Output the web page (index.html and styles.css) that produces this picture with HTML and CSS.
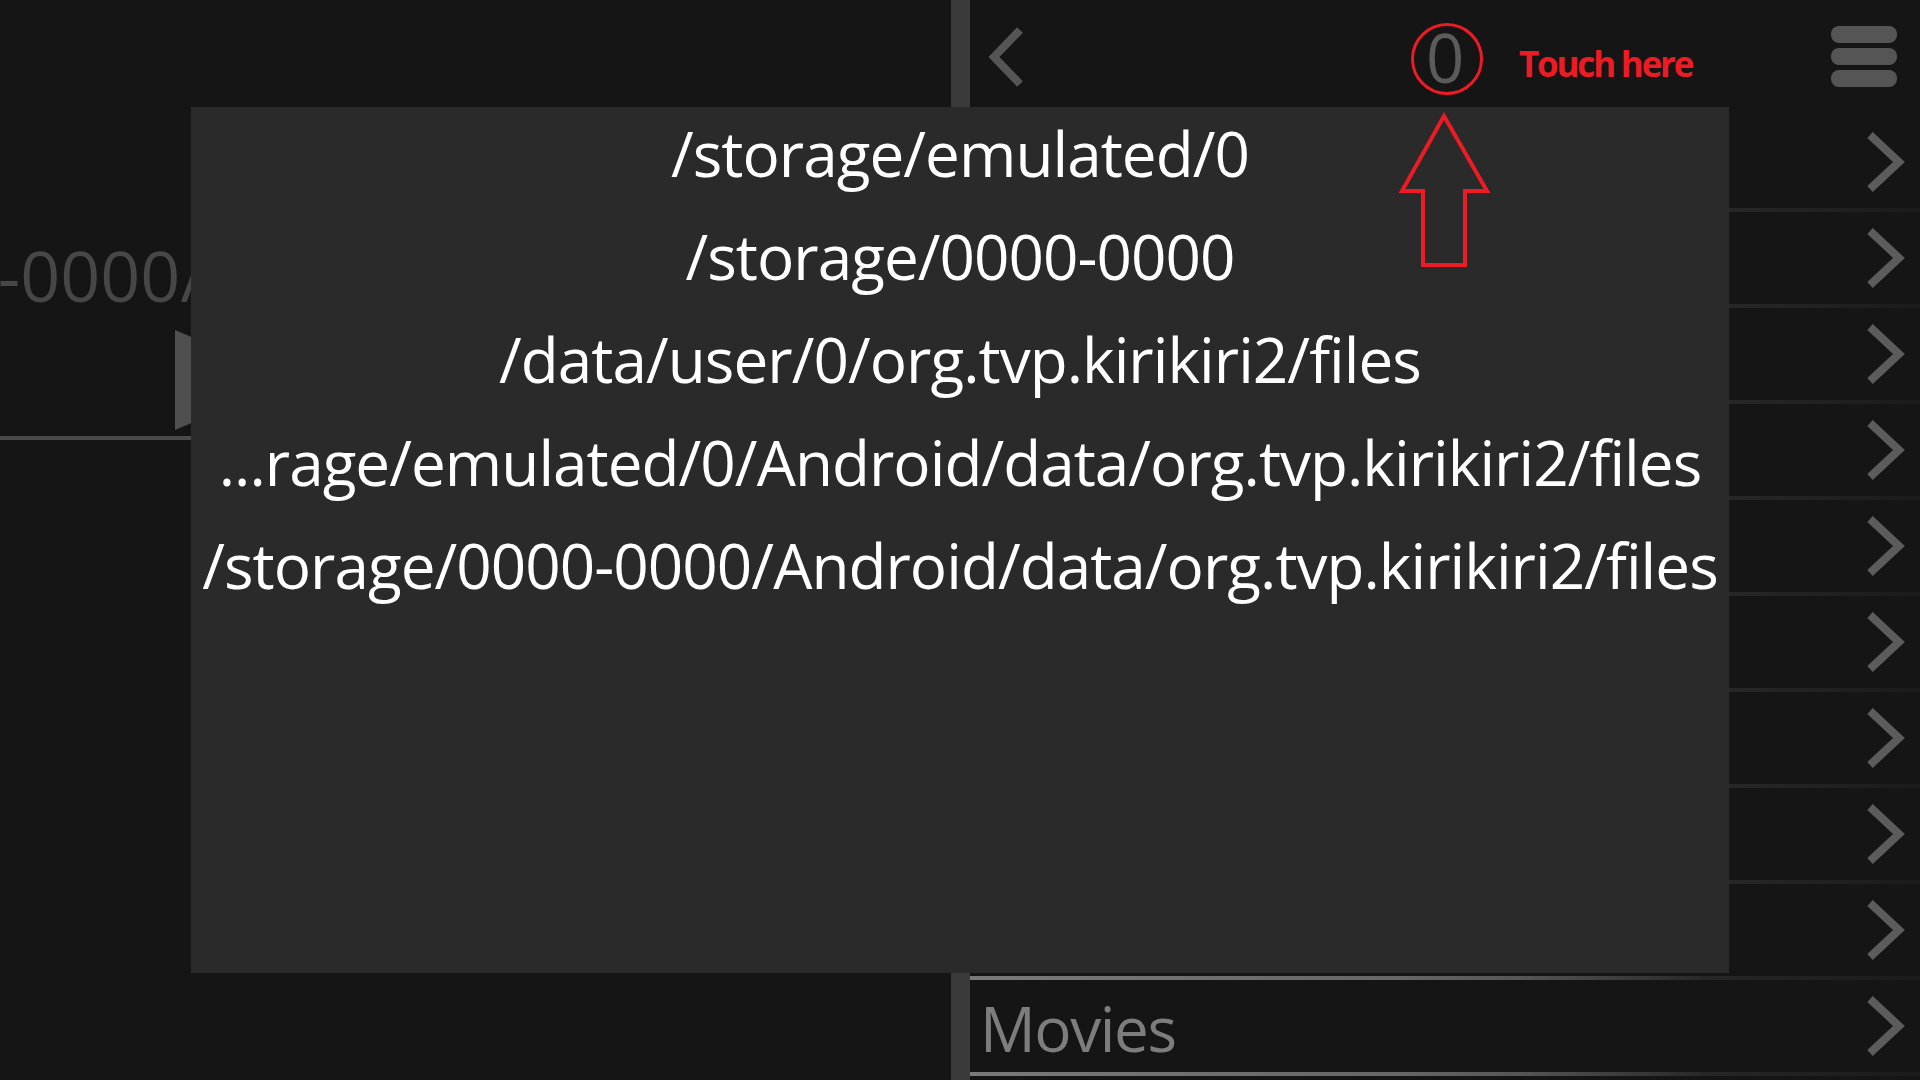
FILE: index.html
```html
<!DOCTYPE html>
<html lang="en">
<head>
<meta charset="utf-8">
<title>Storage picker</title>
<link rel="stylesheet" href="styles.css">
</head>
<body>
<div class="app">
  <section class="left">
    <div class="path-title"><span>/storage/0000-0000/</span></div>
    <div class="expander"></div>
    <div class="seek"></div>
  </section>
  <div class="divider"></div>
  <section class="right">
    <header class="header">
      <svg class="back" width="36" height="62" viewBox="0 0 36 62"><polyline points="32,4 6,31 32,58" /></svg>
      <span class="counter">0</span>
      <div class="menu"><span></span><span></span><span></span></div>
    </header>
    <ul class="rows">
      <li class="row"><svg class="chev" width="40" height="62" viewBox="0 0 40 62"><polyline points="4,4 33,31 4,58" /></svg></li>
      <li class="row"><svg class="chev" width="40" height="62" viewBox="0 0 40 62"><polyline points="4,4 33,31 4,58" /></svg></li>
      <li class="row"><svg class="chev" width="40" height="62" viewBox="0 0 40 62"><polyline points="4,4 33,31 4,58" /></svg></li>
      <li class="row"><svg class="chev" width="40" height="62" viewBox="0 0 40 62"><polyline points="4,4 33,31 4,58" /></svg></li>
      <li class="row"><svg class="chev" width="40" height="62" viewBox="0 0 40 62"><polyline points="4,4 33,31 4,58" /></svg></li>
      <li class="row"><svg class="chev" width="40" height="62" viewBox="0 0 40 62"><polyline points="4,4 33,31 4,58" /></svg></li>
      <li class="row"><svg class="chev" width="40" height="62" viewBox="0 0 40 62"><polyline points="4,4 33,31 4,58" /></svg></li>
      <li class="row"><svg class="chev" width="40" height="62" viewBox="0 0 40 62"><polyline points="4,4 33,31 4,58" /></svg></li>
      <li class="row row-flush"><svg class="chev" width="40" height="62" viewBox="0 0 40 62"><polyline points="4,4 33,31 4,58" /></svg></li>
      <li class="row row-focus"><span class="row-label">Movies</span><svg class="chev" width="40" height="62" viewBox="0 0 40 62"><polyline points="4,4 33,31 4,58" /></svg></li>
    </ul>
  </section>
</div>

<div class="dialog">
  <ul class="path-list">
    <li>/storage/emulated/0</li>
    <li>/storage/0000-0000</li>
    <li>/data/user/0/org.tvp.kirikiri2/files</li>
    <li>...rage/emulated/0/Android/data/org.tvp.kirikiri2/files</li>
    <li>/storage/0000-0000/Android/data/org.tvp.kirikiri2/files</li>
  </ul>
</div>

<div class="note-circle"></div>
<svg class="note-arrow" width="100" height="165" viewBox="0 0 100 165"><polygon points="48,8 91,83 69,83 69,157 27,157 27,83 6,83" /></svg>
<div class="note-text">Touch here</div>
</body>
</html>
```

FILE: styles.css
```css
* { box-sizing: border-box; }

html, body {
  margin: 0;
  padding: 0;
  width: 1920px;
  height: 1080px;
  overflow: hidden;
  background: #151515;
  font-family: "Open Sans", "Noto Sans", sans-serif;
}

.app {
  display: flex;
  width: 1920px;
  height: 1080px;
}

/* left pane */
.left {
  width: 951px;
  display: flex;
  flex-direction: column;
}

.path-title {
  width: 206px;
  margin-top: 227px;
  display: flex;
  justify-content: flex-end;
  overflow: hidden;
  white-space: nowrap;
  font-size: 70px;
  line-height: 96px;
  color: #474747;
}

.expander {
  width: 0;
  height: 0;
  margin-left: 175px;
  margin-top: 7px;
  border-top: 50px solid transparent;
  border-bottom: 50px solid transparent;
  border-left: 117px solid #4f4f4f;
}

.seek {
  margin-top: 6px;
  height: 4px;
  background: #4a4a4a;
}

.divider {
  width: 19px;
  background: #3a3a3a;
}

/* right pane */
.right {
  flex: 1;
  display: flex;
  flex-direction: column;
}

.header {
  height: 116px;
  display: flex;
  align-items: flex-start;
  padding-left: 18px;
  padding-right: 23px;
}

.back {
  margin-top: 26px;
  fill: none;
  stroke: #555555;
  stroke-width: 8;
  stroke-linecap: butt;
  stroke-linejoin: miter;
}

.counter {
  margin-left: 402px;
  margin-top: 11px;
  font-size: 67px;
  line-height: normal;
  color: #5b5b5b;
}

.menu {
  margin-left: auto;
  margin-top: 26px;
  display: flex;
  flex-direction: column;
  gap: 5px;
}

.menu span {
  display: block;
  width: 66px;
  height: 17px;
  border-radius: 8px;
  background: #555555;
}

.rows {
  list-style: none;
  margin: 0;
  padding: 0;
}

.row {
  height: 96px;
  display: flex;
  align-items: center;
  justify-content: flex-end;
  padding-right: 14px;
  border-style: solid;
  border-width: 0 0 4px 0;
  border-image: linear-gradient(90deg, #2e2e2e 0%, #272727 80%, #1b1b1b 100%) 1;
}

.row-flush {
  height: 92px;
  border-width: 0;
}

.row-focus {
  height: 100px;
  justify-content: space-between;
  padding-left: 10px;
  border-width: 4px 0 4px 0;
  border-image: linear-gradient(90deg, #7a7a7a 0%, #666666 45%, #555555 58%, #262626 78%, #1b1b1b 100%) 1;
}

.row-label {
  font-size: 62px;
  letter-spacing: -1.4px;
  line-height: 92px;
  padding-top: 3px;
  color: #7d7d7d;
}

.chev {
  fill: none;
  stroke: #5c5c5c;
  stroke-width: 8;
  stroke-linecap: butt;
  stroke-linejoin: miter;
}

/* overlay dialog */
.dialog {
  position: absolute;
  left: 191px;
  top: 107px;
  width: 1538px;
  height: 866px;
  background: #2a2a2a;
}

.path-list {
  list-style: none;
  margin: -5px 0 0 0;
  padding: 0;
  text-align: center;
  font-size: 62px;
  letter-spacing: -0.95px;
  line-height: 103px;
  color: #ffffff;
  white-space: nowrap;
}

/* red annotations */
.note-circle {
  position: absolute;
  left: 1411px;
  top: 23px;
  width: 72px;
  height: 72px;
  border: 3px solid #ed1c24;
  border-radius: 50%;
}

.note-arrow {
  position: absolute;
  left: 1396px;
  top: 108px;
  fill: none;
  stroke: #ed1c24;
  stroke-width: 4;
  stroke-linejoin: miter;
}

.note-text {
  position: absolute;
  left: 1519px;
  top: 40px;
  font-size: 35px;
  font-weight: 700;
  line-height: normal;
  letter-spacing: -2.2px;
  color: #ed1c24;
  white-space: nowrap;
}
```
